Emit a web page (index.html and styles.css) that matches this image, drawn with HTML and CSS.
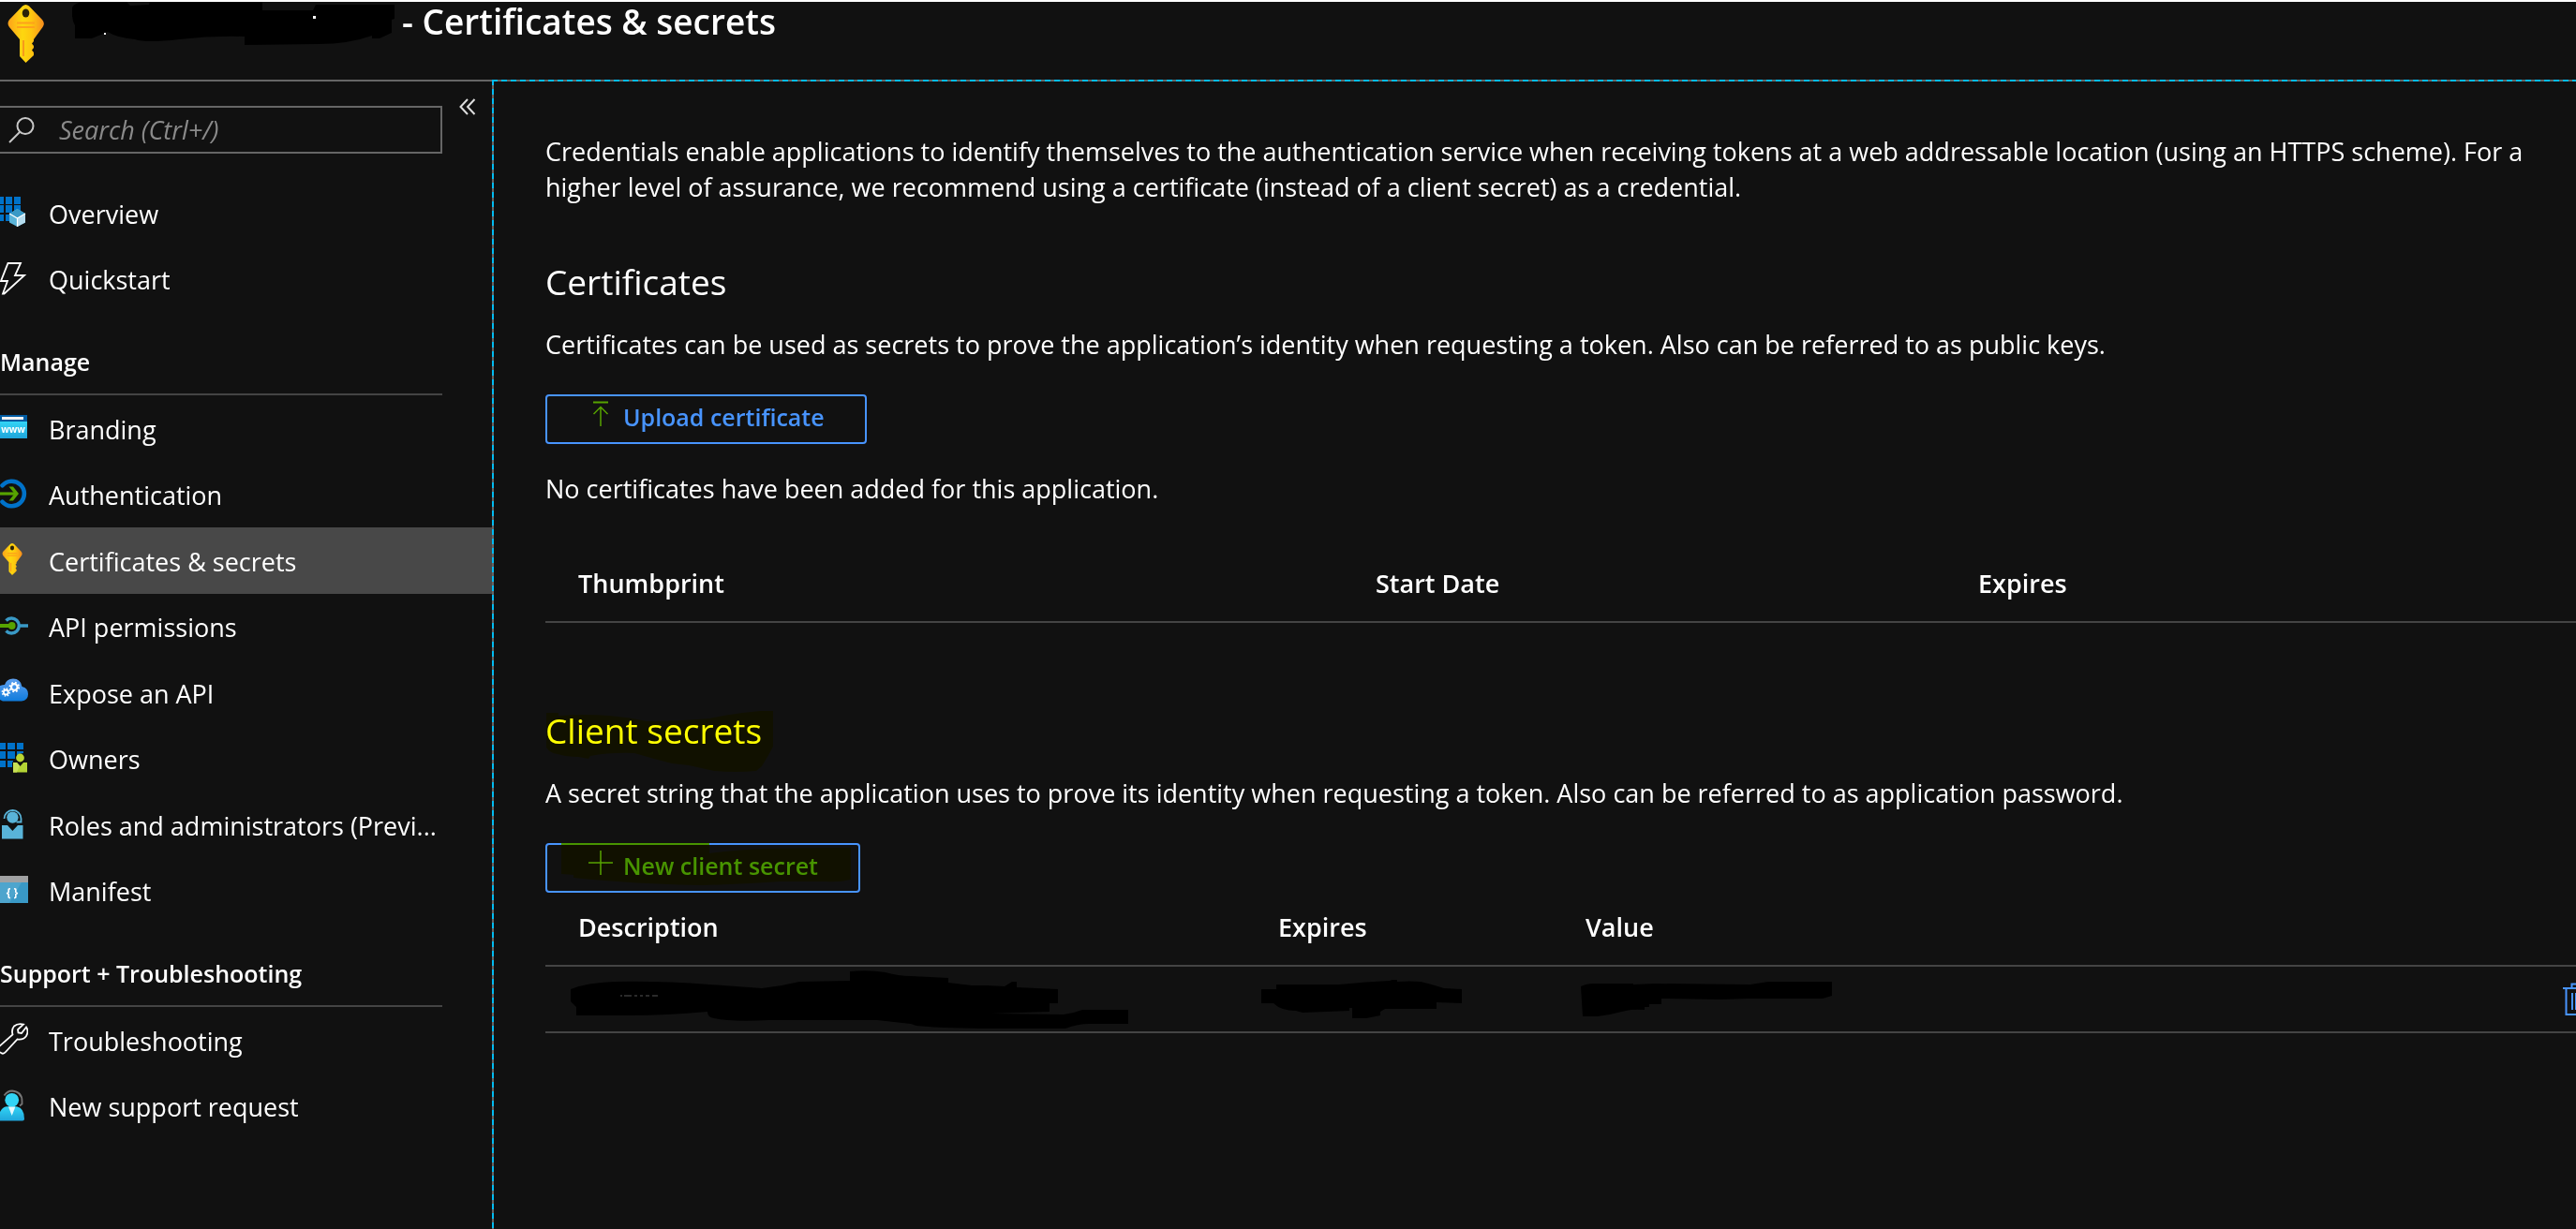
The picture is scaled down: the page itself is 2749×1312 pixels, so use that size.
FILE: index.html
```html
<!DOCTYPE html>
<html lang="en">
<head>
<meta charset="utf-8">
<title>Certificates &amp; secrets</title>
<meta name="viewport" content="width=device-width, initial-scale=1">
<link rel="stylesheet" href="styles.css">
</head>
<body>
<svg class="defs" aria-hidden="true">
  <defs>
    <linearGradient id="gold" x1="0" x2="1"><stop offset="0" stop-color="#fea11b"/><stop offset=".4" stop-color="#fdd70f"/><stop offset=".65" stop-color="#fec60f"/><stop offset="1" stop-color="#f78d1e"/></linearGradient>
    <linearGradient id="sky" x1="0" y1="0" x2="0" y2="1"><stop offset="0" stop-color="#5ea0ef"/><stop offset="1" stop-color="#0f7bdc"/></linearGradient>
    <linearGradient id="aqua" x1="0" y1="0" x2="0" y2="1"><stop offset="0" stop-color="#32d4f5"/><stop offset="1" stop-color="#1fa5da"/></linearGradient>
    <symbol id="key" viewBox="0 0 39 62">
      <path d="M16 1.500q3.500-3 7 0L37 16q3.500 4 .5 8L28 37v2l-2 2.500 2 2.500v2l-2 2.500 2 2.500v3L19.500 62 13 55V37L2 24q-3-4 0-8z" fill="url(#gold)"/>
      <ellipse cx="19.500" cy="9" rx="3.800" ry="4.500" fill="#2a2108"/>
      <path d="M10 19.500h19M10 24h19" stroke="#fea11b" stroke-width="2.200"/>
      <path d="M17 38v17" stroke="#f7931e" stroke-width="1.800"/>
    </symbol>
  </defs>
</svg>

<header class="blade-header">
  <svg class="blade-key" viewBox="0 0 39 62" aria-hidden="true"><use href="#key"/></svg>
  <h1 class="blade-title">
    <svg class="redacted-name" viewBox="77 0 344 50" aria-hidden="true">
      <path d="M88 0Q110-3 135 0v2z" fill="#4a504c"/>
      <path d="M77 8Q79 3 90 2q22-3 45 0l4 4 20-1 1-3h120v9h54l3-6h84v15l-3 1v14l-13 6h-8v-3q-25 9-57 9l-79 1v-9q-35-1-70 3t-47 0q-20-2-29-8l-17 7H80V27q-4-6-3-19z" fill="#000"/>
      <path d="M334 17h3v3h-3zM111 35h2v2h-2z" fill="#fff"/>
    </svg>
    <span>- Certificates &amp; secrets</span>
  </h1>
</header>

<div class="blade-body">
  <aside class="sidebar">
    <div class="search-row">
      <label class="search">
        <svg class="search-icon" viewBox="0 0 28 28" aria-label="Search"><circle cx="18" cy="9.500" r="8.500"/><path d="M12 16 1 27"/></svg>
        <input type="search" class="search-input" placeholder="Search (Ctrl+/)" aria-label="Search">
      </label>
      <button class="collapse" type="button" aria-label="Collapse menu">
        <svg viewBox="0 0 18 18"><path d="M9 1 1.500 9 9 17M16.500 1 9 9l7.500 8"/></svg>
      </button>
    </div>

    <nav aria-label="Application">
      <ul class="menu menu-short">
        <li><a href="#overview">
          <svg viewBox="0 0 30 36"><path d="M0 1h4v8H0zM6 1h7v8H6zM15 1h7v8h-7zM0 10h4v8H0zM6 10h7v8H6zM15 10h7v8h-7zM0 20h4v7H0zM6 20h7v7H6z" fill="#0072c9"/><path d="m18.500 14 8.500 5v9.500L18.500 33 10 28.500V19z" fill="#5bb4d9"/><path d="m18.500 14 8.500 5-8.500 5-8.500-5z" fill="#3999c6"/><path d="m18.500 24 8.500-5v9.500L18.500 33z" fill="#b5dcee"/><path d="m10 19 8.500 5 8.500-5M18.500 24v9" fill="none" stroke="#fff" stroke-width="1.200"/></svg>
          <span>Overview</span></a></li>
        <li><a href="#quickstart">
          <svg viewBox="0 0 30 36"><path d="M8.500 1H22l-6 13h10L4.500 33.500H3L8 20H1z" fill="none" stroke="#fff" stroke-width="1.800"/></svg>
          <span>Quickstart</span></a></li>
      </ul>

      <h2 class="menu-heading">Manage</h2>
      <ul class="menu menu-long">
        <li><a href="#branding">
          <svg viewBox="0 0 30 36"><path d="M0 4h29v7H0z" fill="#005ba1"/><path d="M2 6h23v3H2z" fill="#f2f2f2"/><path d="M0 11h29v18H0z" fill="url(#aqua)"/><text x="14" y="23" class="icon-text icon-text-small">www</text></svg>
          <span>Branding</span></a></li>
        <li><a href="#authentication">
          <svg viewBox="0 0 30 36"><path d="M2.500 8.300a13.300 13.300 0 1 1 0 17.400" fill="none" stroke="#0072c9" stroke-width="4.600" stroke-linecap="round"/><path d="M0 17h18" stroke="#57a300" stroke-width="3.200"/><path d="M9.500 9.500h4.500L20 17l-6 7.500H9.500L15.500 17z" fill="#57a300"/></svg>
          <span>Authentication</span></a></li>
        <li><a href="#certificates" class="current" aria-current="page">
          <svg viewBox="0 0 30 36"><use href="#key" x="2" y="0" width="22" height="34"/></svg>
          <span>Certificates &amp; secrets</span></a></li>
        <li><a href="#permissions">
          <svg viewBox="0 0 30 36"><path d="M6.500 11.500a8 8 0 1 1 0 11M21 17h9" fill="none" stroke="#3999c6" stroke-width="3.400"/><path d="M0 17h12" stroke="#57a300" stroke-width="4"/><circle cx="12.700" cy="17" r="3.900" fill="#57a300"/></svg>
          <span>API permissions</span></a></li>
        <li><a href="#expose">
          <svg viewBox="0 0 30 36"><path d="M0 11q3-1 5-1Q7 3.500 14 3.500q8 0 9.500 8.500 6.500 1.500 6.500 8t-7 7.500H3L0 26z" fill="url(#sky)"/><g fill="none" stroke="#fff"><circle cx="15.300" cy="12.500" r="3.300" stroke-width="2.200"/><circle cx="15.300" cy="12.500" r="4.900" stroke-width="1.800" stroke-dasharray="1.900 1.950"/><circle cx="6.300" cy="18" r="2.500" stroke-width="1.800"/><circle cx="6.300" cy="18" r="4" stroke-width="1.500" stroke-dasharray="1.500 1.640"/></g></svg>
          <span>Expose an API</span></a></li>
        <li><a href="#owners">
          <svg viewBox="0 0 30 36"><path d="M0 1h6v7H0zM8 1h8v7H8zM18 1h7v7h-7zM0 10h6v8H0zM8 10h8v8H8zM18 10h7v2q-7 0-7 6zM0 20h6v7H0zM8 20h6v1l-1 1v5H8z" fill="#0072c9"/><circle cx="21.500" cy="17" r="4.400" fill="#bad532"/><path d="M14 22h4l3.500 4 3.500-4h4v10.500H14z" fill="#b4d435"/><path d="M14 22h4l3 3.500-3 7h-4z" fill="#c8e055"/></svg>
          <span>Owners</span></a></li>
        <li><a href="#roles" title="Roles and administrators (Preview)">
          <svg viewBox="0 0 30 36"><circle cx="13.400" cy="10.600" r="6.200" fill="#59b4d9"/><path d="M4.500 12a9 9 0 1 1 18 0v3.500h-5" fill="none" stroke="#59b4d9" stroke-width="1.800"/><path d="M2 19h6l5.400 6 5.600-6h5.500v14.500H2z" fill="#59b4d9"/></svg>
          <span>Roles and administrators (Previ...</span></a></li>
        <li><a href="#manifest">
          <svg viewBox="0 0 30 36"><path d="M0 2h30v7H0z" fill="#a0a1a2"/><path d="M0 9h30v22H0z" fill="#3999c6"/><path d="M0 9h23L10 31H0z" fill="#4ea5cd"/><text x="13" y="24" class="icon-text">{ }</text></svg>
          <span>Manifest</span></a></li>
      </ul>

      <h2 class="menu-heading">Support + Troubleshooting</h2>
      <ul class="menu menu-short">
        <li><a href="#troubleshooting">
          <svg viewBox="0 0 30 36"><path d="M-3 27 13.500 12.500Q12 7 15 3.500q4-3.500 10-2L19 7l.5 3.500 3.500.5 5-6.500q3 4.500 0 9.500-3 4.500-9.500 3.500L6 31q-3 3.500-6 0" fill="none" stroke="#fff" stroke-width="1.800"/></svg>
          <span>Troubleshooting</span></a></li>
        <li><a href="#support">
          <svg viewBox="0 0 30 36"><path d="M4.500 6.500Q8 1.500 13 1.500q10.500 1 10.500 11v3l-2.500 2" fill="none" stroke="#767676" stroke-width="1.800"/><circle cx="12.700" cy="11.300" r="7.400" fill="#32d4f5"/><path d="M0 24q2.500-5 7-5.700h11Q26 20 26 31.500q0 2-2 2H0z" fill="url(#aqua)"/><path d="M9 18.500h7.400L12.700 28z" fill="#e6f9fe"/></svg>
          <span>New support request</span></a></li>
      </ul>
    </nav>
  </aside>

  <main class="content">
    <p>Credentials enable applications to identify themselves to the authentication service when receiving tokens at a web addressable location (using an HTTPS scheme). For a higher level of assurance, we recommend using a certificate (instead of a client secret) as a credential.</p>

    <section>
      <h2 class="section-title">Certificates</h2>
      <p>Certificates can be used as secrets to prove the application’s identity when requesting a token. Also can be referred to as public keys.</p>
      <button class="action upload" type="button">
        <svg viewBox="0 0 26 28" aria-hidden="true"><path d="M5 1.500h16" stroke-width="2"/><path d="M13 27V6.500M5.500 14 13 6.500l7.500 7.500"/></svg>
        <span>Upload certificate</span>
      </button>
      <p class="empty-note">No certificates have been added for this application.</p>
      <table class="grid certificates">
        <colgroup><col class="thumbprint"><col class="start"><col></colgroup>
        <thead><tr><th>Thumbprint</th><th>Start Date</th><th>Expires</th></tr></thead>
      </table>
    </section>

    <section>
      <div class="marked title-row">
        <h2 class="section-title">Client secrets</h2>
        <svg class="marker title-marker" viewBox="0 0 246 66" aria-hidden="true"><path d="M1 2h13v3q30-2 54 0t40 6q32 0 67-3 28-6 54-8h14v38q-5 10-12 21l-6 5q-22 2-45 0l-27-6-18-2q-20-5-40-11-25-1-47 3l-2 3-11-2Q22 49 13 46 5 45 1 39z"/></svg>
      </div>
      <p>A secret string that the application uses to prove its identity when requesting a token. Also can be referred to as application password.</p>
      <div class="marked">
        <button class="action new-secret" type="button">
          <svg viewBox="0 0 26 28" aria-hidden="true"><path d="M13 1v26M0 14h26"/></svg>
          <span>New client secret</span>
        </button>
        <svg class="marker button-marker" viewBox="0 0 335 53" aria-hidden="true"><path d="M17 0h158v11q30-4 63-5t88-1v34q-13 3-26 2h-49q-40 3-84 4-50-1-90-4-30-2-47-4v-3l-13-1z"/></svg>
      </div>
      <table class="grid secrets">
        <colgroup><col class="description"><col class="expires"><col><col class="tools"></colgroup>
        <thead><tr><th>Description</th><th>Expires</th><th>Value</th><th aria-label="Actions"></th></tr></thead>
        <tbody>
          <tr>
            <td><svg width="605" height="62" viewBox="29 5 605 62" aria-hidden="true"><path d="M39 25q17-7 46-8 50-1 102 3l56 4q20-2 40-7l54-1V6q20-2 38 1 14 4 27 4l40 2v5l25 3h17l18 1 8-5h5v6l44 2v15h-9v9l-63 2 78 1q10-1 20-5h49v15h-42q-12 0-25 5h-76q-50 0-83-3l-6-2-36-4H250q-40 2-58-2-7-1-7-7-45 4-82 4H45v-9l-6-6z"/><path d="M92 32h2m2 0h8m3 0h3m3 0h3m3 0h4m3 0h6" stroke="#555" fill="none"/></svg></td>
            <td><svg width="214" height="41" viewBox="0 0 214 41" aria-hidden="true"><path d="M0 10h16V5h67q30-3 54-4l3-1h5v2q14-1 25 0 13 3 25 7l19 1v15l-27-1v7h-55l-5 3v4l-15 3H97V30h-3v3l-50 2-7-2q-16 0-24-8H0z"/></svg></td>
            <td><svg width="281" height="37" viewBox="-13 0 281 37" aria-hidden="true"><path d="M0 5q6-3 14-3h42v1l23-1 102 1 19-3h68v15l-10 3h-80l-29 1-63-1v6H73v3h-5v3q-12-1-20 1-15 4-30 6H2z"/></svg></td>
            <td class="tools-cell"><button class="delete" type="button" aria-label="Delete secret"><svg viewBox="0 0 28 36"><path d="M0 6h28M3.500 6v28h21V6M9.500 6V1.500h9V6M10 11v18M14 11v18M18 11v18"/></svg></button></td>
          </tr>
        </tbody>
      </table>
    </section>
  </main>
</div>
</body>
</html>
```
FILE: styles.css
```css
:root {
  --bg: #111111;
  --text: #ffffff;
  --line: #666666;
  --rule: #444444;
  --link: #4894fe;
  --focus: #00bcf2;
  --add: #57a300;
}

* { box-sizing: border-box; }

body {
  margin: 0;
  min-height: 100vh;
  display: flex;
  flex-direction: column;
  border-top: 2px solid #ffffff;
  background: var(--bg);
  color: var(--text);
  font: 27px/38px "Open Sans", "Noto Sans", sans-serif;
  overflow-x: hidden;
}

h1, h2, p, ul { margin: 0; padding: 0; }
ul { list-style: none; }
button, input { font: inherit; }
svg { display: block; flex: none; }
.defs { position: absolute; width: 0; height: 0; }

/* Header */
.blade-header {
  display: flex;
  align-items: flex-start;
  gap: 30px;
  height: 85px;
  padding: 3px 8px;
  border-bottom: 2px solid var(--line);
}
.blade-key { width: 39px; height: 62px; }
.blade-title {
  display: flex;
  gap: 8px;
  margin-top: -5px;
  font-size: 37px;
  line-height: 46px;
  font-weight: 600;
  white-space: nowrap;
}
.redacted-name { width: 344px; height: 50px; }

.blade-body { flex: 1; display: flex; }

/* Sidebar */
.sidebar { flex: none; width: 525px; }
.search-row {
  display: flex;
  align-items: flex-start;
  gap: 18px;
  padding: 18px 0 28px;
}
.search {
  display: flex;
  align-items: center;
  gap: 26px;
  width: 472px;
  height: 51px;
  margin-top: 8px;
  padding-left: 9px;
  border: 2px solid var(--line);
  border-left: 0;
}
.search-icon { width: 28px; height: 28px; fill: none; stroke: #c8c8c8; stroke-width: 2px; }
.search-input {
  flex: 1;
  min-width: 0;
  padding: 0;
  border: 0;
  outline: 0;
  background: none;
  color: var(--text);
}
.search-input::placeholder { color: #8a8a8a; font-style: italic; opacity: 1; }
.collapse { padding: 0; border: 0; background: none; }
.collapse svg { width: 18px; height: 18px; fill: none; stroke: #dddddd; stroke-width: 2px; }

.menu { display: flex; flex-direction: column; }
.menu-short { height: 141px; }
.menu-long { height: 564px; }
.menu li { flex: 1; display: flex; }
.menu a {
  flex: 1;
  min-width: 0;
  display: flex;
  align-items: center;
  gap: 22px;
  padding-right: 52px;
  color: inherit;
  text-decoration: none;
}
.menu a svg { width: 30px; height: 36px; }
.menu a span { padding-top: 3px; overflow: hidden; text-overflow: ellipsis; white-space: nowrap; }
.menu .current { background: #484848; }
.menu-heading {
  width: 472px;
  padding: 36px 0 17px;
  border-bottom: 2px solid var(--rule);
  font-size: 25px;
  line-height: 34px;
  font-weight: 600;
}
.icon-text { fill: #ffffff; font-size: 12px; font-weight: 700; text-anchor: middle; }
.icon-text-small { font-size: 10px; }

/* Content pane with its focus outline on the top and left edges */
.content {
  flex: 1;
  min-width: 0;
  margin-top: -2px;
  padding: 58px 30px 60px 57px;
  overflow: hidden;
  background:
    repeating-linear-gradient(90deg, var(--focus) 0 6px, var(--line) 6px 10px) top / 100% 2px no-repeat,
    repeating-linear-gradient(180deg, var(--focus) 0 6px, var(--line) 6px 10px) left / 2px 100% no-repeat,
    var(--bg);
}
.section-title {
  margin: 57px 0 23px;
  font-size: 37px;
  line-height: 50px;
  font-weight: 400;
}
.action {
  display: flex;
  gap: 11px;
  height: 53px;
  margin-top: 34px;
  padding: 5px 43px 5px 44px;
  border: 2px solid var(--link);
  border-radius: 4px;
  background: none;
  color: var(--link);
  font-size: 25px;
  line-height: 34px;
  font-weight: 600;
}
.action svg { width: 26px; height: 28px; fill: none; stroke: var(--add); stroke-width: 1.5px; }
.empty-note { margin-top: 29px; }

.grid {
  width: calc(100% + 68px);
  border-collapse: collapse;
  table-layout: fixed;
}
.grid th {
  padding: 0 0 21px 35px;
  font-weight: 600;
  text-align: left;
}
.grid tr { border-bottom: 2px solid var(--rule); }
.certificates { margin: 63px 0 90px; }
.secrets { margin-top: 18px; }
.thumbprint { width: 851px; }
.start { width: 643px; }
.description { width: 747px; }
.expires { width: 328px; }
.tools { width: 100px; }
.grid td { height: 71px; padding: 0 0 0 17px; vertical-align: middle; }
.grid .tools-cell { padding-right: 24px; }
.delete { display: block; margin-left: auto; padding: 0; border: 0; background: none; }
.delete svg { width: 28px; height: 36px; fill: none; stroke: var(--link); stroke-width: 2px; }

/* Highlighter strokes laid over the title and the button */
.marked { position: relative; }
.title-row .section-title { margin-top: 0; }
.marker { position: absolute; left: 0; fill: #ffff00; mix-blend-mode: multiply; pointer-events: none; }
.title-marker { top: 4px; width: 246px; height: 66px; }
.button-marker { top: 0; width: 335px; height: 53px; }
```
